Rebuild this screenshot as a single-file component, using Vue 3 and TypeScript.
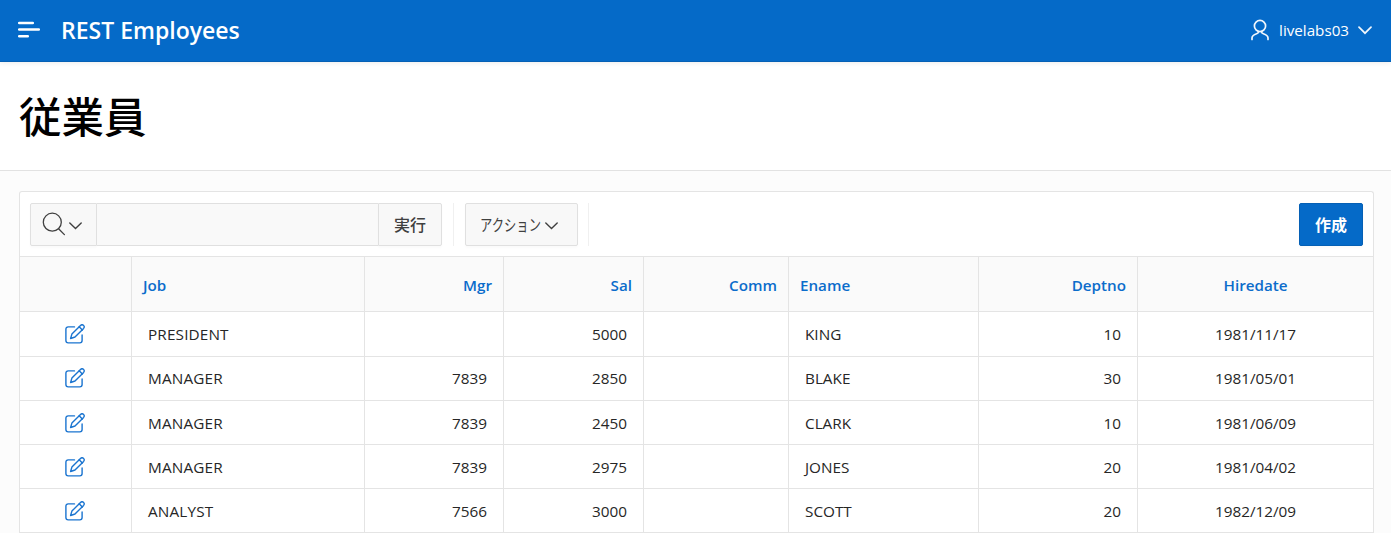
<script setup lang="ts">
interface Column {
  key: string
  label: string
  align: 'left' | 'right' | 'center'
}

const columns: Column[] = [
  { key: 'job', label: 'Job', align: 'left' },
  { key: 'mgr', label: 'Mgr', align: 'right' },
  { key: 'sal', label: 'Sal', align: 'right' },
  { key: 'comm', label: 'Comm', align: 'right' },
  { key: 'ename', label: 'Ename', align: 'left' },
  { key: 'deptno', label: 'Deptno', align: 'right' },
  { key: 'hiredate', label: 'Hiredate', align: 'center' },
]

const employees: Record<string, string>[] = [
  { job: 'PRESIDENT', mgr: '', sal: '5000', comm: '', ename: 'KING', deptno: '10', hiredate: '1981/11/17' },
  { job: 'MANAGER', mgr: '7839', sal: '2850', comm: '', ename: 'BLAKE', deptno: '30', hiredate: '1981/05/01' },
  { job: 'MANAGER', mgr: '7839', sal: '2450', comm: '', ename: 'CLARK', deptno: '10', hiredate: '1981/06/09' },
  { job: 'MANAGER', mgr: '7839', sal: '2975', comm: '', ename: 'JONES', deptno: '20', hiredate: '1981/04/02' },
  { job: 'ANALYST', mgr: '7566', sal: '3000', comm: '', ename: 'SCOTT', deptno: '20', hiredate: '1982/12/09' },
]
</script>

<template>
  <div class="page">
    <header class="topbar">
      <svg class="menu" width="24" height="18" viewBox="0 0 24 18">
        <path d="M1.2 2H14.8M1.2 8.5H20.8M1.2 15.3H9.8" fill="none" stroke="#fff" stroke-width="2.5" stroke-linecap="round" />
      </svg>
      <span class="brand">REST Employees</span>
      <div class="user">
        <svg class="person" width="18" height="22" viewBox="0 0 18 22">
          <g fill="none" stroke="#f0f6fc" stroke-width="1.7" stroke-linecap="round">
            <circle cx="9" cy="7" r="5.6" />
            <path d="M1 20.4v-1.4c0-2.6 2-3.3 4.6-4.2 1.2-.4 1.8-1 2-2.2M17 20.4v-1.4c0-2.6-2-3.3-4.6-4.2-1.2-.4-1.8-1-2-2.2" />
          </g>
        </svg>
        <span class="username">livelabs03</span>
        <svg class="user-chevron" width="14" height="9" viewBox="0 0 14 9">
          <path d="M1 1.2L7 7.2L13 1.2" fill="none" stroke="#f0f6fc" stroke-width="1.7" stroke-linecap="round" />
        </svg>
      </div>
    </header>

    <section class="hero">
      <h1>従業員</h1>
    </section>

    <main class="report">
      <div class="toolbar">
        <div class="search">
          <button class="search-col" type="button" aria-label="検索">
            <svg width="24" height="24" viewBox="0 0 24 24">
              <g fill="none" stroke="#404040" stroke-width="1.3" stroke-linecap="round">
                <circle cx="10.3" cy="10.2" r="9" />
                <path d="M16.6 16.7L22.4 22.6" />
              </g>
            </svg>
            <svg class="small-chevron" width="13" height="8" viewBox="0 0 13 8">
              <path d="M.8 1L6.5 6.5L12.2 1" fill="none" stroke="#404040" stroke-width="1.4" stroke-linecap="round" />
            </svg>
          </button>
          <input class="search-input" type="text" />
          <button class="go" type="button">実行</button>
        </div>
        <span class="divider first"></span>
        <button class="actions" type="button">
          <span class="actions-label">アクション</span>
          <svg class="actions-chevron" width="13" height="8" viewBox="0 0 13 8">
            <path d="M.8 1L6.5 6.5L12.2 1" fill="none" stroke="#404040" stroke-width="1.4" stroke-linecap="round" />
          </svg>
        </button>
        <span class="divider"></span>
        <button class="create" type="button">作成</button>
      </div>

      <div class="row head">
        <div class="cell"></div>
        <div v-for="c in columns" :key="c.key" class="cell" :class="c.align">{{ c.label }}</div>
      </div>
      <div v-for="(e, i) in employees" :key="i" class="row body" :class="{ raised: i === 1 }">
        <div class="cell edit">
          <svg width="21" height="20" viewBox="0 0 21 20">
            <g fill="none" stroke="#1a74d0" stroke-width="1.4" stroke-linejoin="round" stroke-linecap="round">
              <path d="M9.5 2.9H3.2C1.8 2.9.9 3.8.9 5.2v11.4c0 1.4.9 2.3 2.3 2.3h11.6c1.4 0 2.3-.9 2.3-2.3V11" />
              <path d="M5.6 14.5l1.3-4.4L15.5 1.5c1-1 2.2-.9 3.1-.1s.9 2 0 3L10 13z" />
              <path d="M14.2 2.8l3.1 3.1" />
            </g>
          </svg>
        </div>
        <div v-for="c in columns" :key="c.key" class="cell" :class="[c.align, c.key]">{{ e[c.key] }}</div>
      </div>
    </main>
  </div>
</template>

<style>
body {
  background: #fcfcfc;
  overflow: hidden;
}
</style>

<style scoped>
.page {
  height: 533px;
  overflow: hidden;
  background: #fcfcfc;
  font-family: "Open Sans", "Noto Sans CJK JP", sans-serif;
  color: #262626;
}
.page * {
  box-sizing: border-box;
}
.topbar {
  position: relative;
  display: flex;
  align-items: center;
  height: 62px;
  padding: 0 19px 0 18px;
  background: #056ac8;
  border-bottom: 1px solid #0560b5;
  box-shadow: 0 1px 5px rgba(0, 0, 0, 0.08);
  color: #fff;
}
.menu {
  margin-top: -1px;
}
.brand {
  margin: -2px 0 0 19px;
  font-size: 23px;
  line-height: 30px;
  font-weight: 600;
}
.user {
  display: flex;
  align-items: center;
  margin-left: auto;
}
.username {
  margin: -2px 9px 0 10px;
  font-size: 15.2px;
  line-height: 20px;
}
.person {
  margin-top: -2px;
}
.hero {
  height: 109px;
  padding: 22px 0 0 19px;
  background: #fff;
  border-bottom: 1px solid #e2e2e2;
}
h1 {
  margin: 0;
  font-size: 42.5px;
  line-height: 62px;
  font-weight: 500;
  font-family: "Noto Sans CJK JP", sans-serif;
  color: #000;
}
.report {
  width: 1355px;
  margin: 20px 0 0 19px;
  background: #fff;
  border: 1px solid #e4e4e4;
  border-bottom: 0;
  border-radius: 3px 3px 0 0;
}
.toolbar {
  display: flex;
  align-items: center;
  height: 65px;
  padding: 0 10px;
  border-bottom: 1px solid #e4e4e4;
}
button {
  padding: 0;
  font-family: inherit;
  color: #404040;
  background: #f8f8f8;
  border: 1px solid #e0e0e0;
  box-shadow: 0 2px 2px rgba(0, 0, 0, 0.02);
}
.search {
  display: flex;
  height: 43px;
}
.search-col {
  display: flex;
  align-items: center;
  width: 67px;
  padding-left: 11px;
  border-radius: 2px 0 0 2px;
}
.small-chevron {
  margin: 3px 0 0 3px;
}
.search-input {
  width: 281px;
  padding: 0 8px;
  border: solid #e0e0e0;
  border-width: 1px 0;
  background: #f9f9f9;
  outline: none;
}
.go {
  width: 64px;
  border-radius: 0 2px 2px 0;
  font-size: 16px;
  font-weight: 500;
}
.divider {
  width: 1px;
  height: 43px;
  margin-left: 10px;
  background: #f0f0f0;
}
.divider.first {
  margin: 0 11px;
}
.actions {
  display: flex;
  align-items: center;
  width: 113px;
  height: 43px;
  padding-left: 14px;
  border-radius: 2px;
}
.actions-label {
  width: 60px;
  margin: 1px 5px 0 0;
  font-size: 16px;
  line-height: 20px;
  white-space: nowrap;
  transform: scaleX(0.77);
  transform-origin: left center;
}
.actions-chevron {
  margin-top: 3px;
}
.create {
  width: 64px;
  height: 43px;
  margin-left: auto;
  border-color: #0560b5;
  border-radius: 2px;
  background: #056ac8;
  color: #fff;
  font-size: 16px;
  font-weight: 700;
}
.row {
  display: grid;
  grid-template-columns: 112px 233px 139px 140px 145px 190px 159px 1fr;
  height: 44px;
  border-bottom: 1px solid #e4e4e4;
  font-size: 15.3px;
}
.head {
  height: 55px;
  background: #fafafa;
  color: #0b6ccb;
  font-size: 15.2px;
  font-weight: 600;
}
.head + .row {
  height: 45px;
}
.cell {
  display: flex;
  align-items: center;
  padding: 0 16px;
  border-right: 1px solid #e4e4e4;
  line-height: 21px;
  white-space: nowrap;
}
.cell:last-child {
  border-right: 0;
}
.head .cell {
  padding: 3px 11px 0;
}
.body .cell {
  padding-top: 1px;
}
.head + .body .cell {
  padding-top: 0;
}
.body.raised .cell {
  padding-top: 0;
  padding-bottom: 1px;
}
.body .job {
  letter-spacing: 0.15px;
}
.right {
  justify-content: flex-end;
}
.center {
  justify-content: center;
}
.body .edit {
  justify-content: center;
  padding-top: 0;
}
.head + .body .edit {
  padding-bottom: 1px;
}
</style>
